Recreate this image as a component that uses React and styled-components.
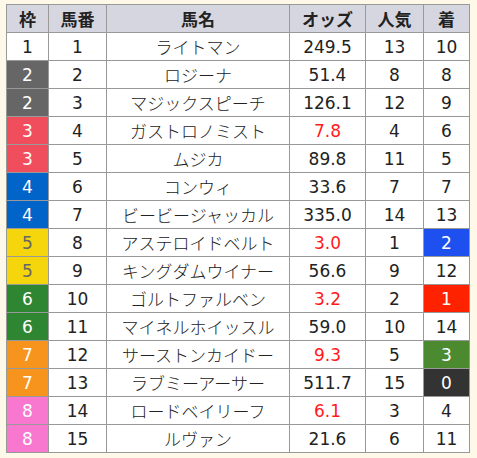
import React from "react";
import styled, { createGlobalStyle } from "styled-components";

const GlobalStyle = createGlobalStyle`
    body {
        margin: 0;
        background: #fdf8e8;
        font-family: "DejaVu Sans", "Noto Sans CJK JP", sans-serif;
    }
`;

const frameColors = {
    1: { bg: "#ffffff", fg: "#222222" },
    2: { bg: "#666666", fg: "#ffffff" },
    3: { bg: "#f04e5d", fg: "#ffffff" },
    4: { bg: "#0064c8", fg: "#ffffff" },
    5: { bg: "#f5d50c", fg: "#666666" },
    6: { bg: "#2e8632", fg: "#ffffff" },
    7: { bg: "#f7941e", fg: "#ffffff" },
    8: { bg: "#f878d0", fg: "#ffffff" },
};

const finishColors = {
    1: "#ff2200",
    2: "#1e50f0",
    3: "#4b8a2e",
    0: "#333333",
};

const horses = [
    [1, 1, "ライトマン", "249.5", 13, 10],
    [2, 2, "ロジーナ", "51.4", 8, 8],
    [2, 3, "マジックスピーチ", "126.1", 12, 9],
    [3, 4, "ガストロノミスト", "7.8", 4, 6],
    [3, 5, "ムジカ", "89.8", 11, 5],
    [4, 6, "コンウィ", "33.6", 7, 7],
    [4, 7, "ビービージャッカル", "335.0", 14, 13],
    [5, 8, "アステロイドベルト", "3.0", 1, 2],
    [5, 9, "キングダムウイナー", "56.6", 9, 12],
    [6, 10, "ゴルトファルベン", "3.2", 2, 1],
    [6, 11, "マイネルホイッスル", "59.0", 10, 14],
    [7, 12, "サーストンカイドー", "9.3", 5, 3],
    [7, 13, "ラブミーアーサー", "511.7", 15, 0],
    [8, 14, "ロードベイリーフ", "6.1", 3, 4],
    [8, 15, "ルヴァン", "21.6", 6, 11],
];

const Wrap = styled.div`
    padding: 4px 0 0 6px;
`;

const Table = styled.table`
    border-collapse: collapse;
    width: 463px;
    table-layout: fixed;
    background: #ffffff;
    color: #222222;
    font-size: 17px;
`;

const Row = styled.tr`
    height: 28px;
`;

const Th = styled.th`
    background: #d5d6e0;
    border: 1px solid #999999;
    padding: 0;
    line-height: 20px;
    font-family: "Noto Sans CJK JP", sans-serif;
    font-weight: bold;
    font-size: 17px;
    text-align: center;
`;

const Td = styled.td`
    border: 1px solid #999999;
    padding: 0;
    line-height: 20px;
    text-align: center;
`;

const NameCell = styled(Td)`
    font-family: "Noto Sans CJK JP", sans-serif;
    font-weight: 300;
`;

const FrameCell = styled(Td)`
    background: ${(p) => frameColors[p.$frame].bg};
    color: ${(p) => frameColors[p.$frame].fg};
`;

const OddsCell = styled(Td)`
    color: ${(p) => (p.$fav ? "#ff1a1a" : "#222222")};
`;

const FinishCell = styled(Td)`
    background: ${(p) => finishColors[p.$place] || "#ffffff"};
    color: ${(p) => (finishColors[p.$place] ? "#ffffff" : "#222222")};
`;

export default function App() {
    return (
        <>
            <GlobalStyle />
            <Wrap>
                <Table>
                    <colgroup>
                        <col style={{ width: 42 }} />
                        <col style={{ width: 58 }} />
                        <col style={{ width: 183 }} />
                        <col style={{ width: 76 }} />
                        <col style={{ width: 58 }} />
                        <col style={{ width: 46 }} />
                    </colgroup>
                    <thead>
                        <Row>
                            <Th>枠</Th>
                            <Th>馬番</Th>
                            <Th>馬名</Th>
                            <Th>オッズ</Th>
                            <Th>人気</Th>
                            <Th>着</Th>
                        </Row>
                    </thead>
                    <tbody>
                        {horses.map(([frame, num, name, odds, pop, finish]) => (
                            <Row key={num}>
                                <FrameCell $frame={frame}>{frame}</FrameCell>
                                <Td>{num}</Td>
                                <NameCell>{name}</NameCell>
                                <OddsCell $fav={pop <= 5}>{odds}</OddsCell>
                                <Td>{pop}</Td>
                                <FinishCell $place={finish}>{finish}</FinishCell>
                            </Row>
                        ))}
                    </tbody>
                </Table>
            </Wrap>
        </>
    );
}
